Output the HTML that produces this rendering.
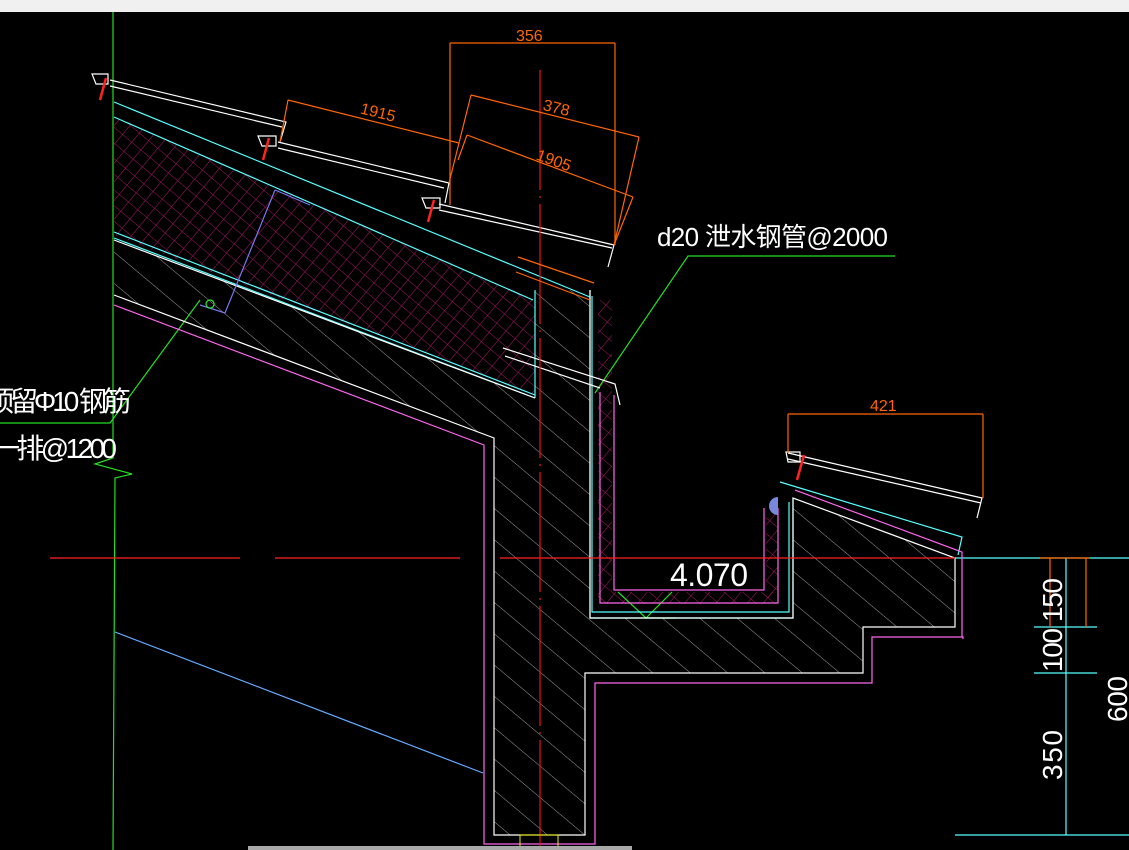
<!DOCTYPE html>
<html><head><meta charset="utf-8"><style>
html,body{margin:0;padding:0;background:#000;width:1129px;height:850px;overflow:hidden}
svg{display:block}
text{font-family:"Liberation Sans","Noto Sans CJK SC",sans-serif}
</style></head><body>
<svg width="1129" height="850" viewBox="0 0 1129 850" xmlns="http://www.w3.org/2000/svg">
<defs>
<pattern id="hatch" patternUnits="userSpaceOnUse" width="24" height="24" patternTransform="rotate(-50)">
<line x1="0" y1="0" x2="0" y2="24" stroke="#b0b0b0" stroke-width="0.9"/>
</pattern>
<pattern id="grid" patternUnits="userSpaceOnUse" width="12" height="12" patternTransform="rotate(40)">
<path d="M0 0H12M0 0V12" stroke="#a0185e" stroke-width="1.1" fill="none"/>
</pattern>
</defs>
<rect width="1129" height="850" fill="#000"/>
<rect width="1129" height="12" fill="#f0f0f0"/>

<polygon points="114,240 535,398 535,290 590,290 590,618 793,618 793,498 955,558 955,627 863,627 863,673 585,673 585,835 494,835 494,438 114,295" fill="url(#hatch)"/>
<polygon points="114,117 535,300 535,395 114,235" fill="url(#grid)"/>
<rect x="598" y="300" width="14" height="300" fill="url(#grid)"/>
<rect x="598" y="592" width="180" height="12" fill="url(#grid)"/>
<rect x="766" y="508" width="12" height="90" fill="url(#grid)"/>

<g fill="none" stroke-width="1.2">
<path d="M113 12V458L95 464L132 474L115 478L113 850" stroke="#22e022"/>
<path d="M0 423H110L200 300" stroke="#22e022"/>
<path d="M895 256H688L595 393" stroke="#22e022"/>
<path d="M618 592L646 618L672 592M646 618H676" stroke="#22e022"/>
<path d="M114 102L590 297M114 117L533 300M114 232L535 395M114 238L535 398" stroke="#5ff"/>
<path d="M535 290V398M590 290V618H793V498" stroke="#5ff"/>
<path d="M592 296V612H789V502" stroke="#5ff"/>
<path d="M780 482L962 537L958 555M955 558H1129M1034 627H1097M1034 673H1097M955 835H1129M1066 558V835" stroke="#5ff"/>
<path d="M110 80L286 122L280 142M110 86L282 127" stroke="#fff"/>
<path d="M278 142L449 183L445 203M278 148L444 188" stroke="#fff"/>
<path d="M439 204L614 245L608 267M439 210L612 248" stroke="#fff"/>
<path d="M788 453L982 498L977 518M788 459L981 503" stroke="#fff"/>
<path d="M114 295L494 438V835H585V673H863V627H955V558L793 498V618H590V290" stroke="#fff"/>
<path d="M114 240L535 398" stroke="#fff"/>
<path d="M503 348L615 384L620 405M505 356L600 388" stroke="#fff"/>
<path d="M92 74H108V84H96Z M258 136H276V146H262Z M422 198H440V208H426Z M786 452H800V462H788Z" stroke="#fff"/>
<path d="M114 305L484 445V844H595V683H872V637H963V639M795 490L962 552V637" stroke="#f6e"/>
<path d="M600 392V603H778V508M614 395V590H764V508" stroke="#f6e"/>
<path d="M50 558H240M275 558H460M500 558H955" stroke="#f22"/>
<path d="M540 70V850" stroke="#e11" stroke-dasharray="120 6 2 6"/>
<path d="M106 78L100 100M269 138L263 160M434 200L428 222M804 455L797 480" stroke="#f22" stroke-width="2.5"/>
<path d="M115 632L483 773" stroke="#6af"/>
<path d="M275 190L310 205M275 190L225 313L200 305" stroke="#77e"/>
<g stroke="#f60">
<path d="M450 43H615M450 43V205M615 43V245"/>
<path d="M288 100L459 143M288 100L280 142"/>
<path d="M471 95L639 137M471 95L449 183M639 137L614 245"/>
<path d="M467 135L633 197M467 135L458 160M633 197L614 245"/>
<path d="M518 257L594 283M516 272L590 300"/>
<path d="M788 414H983M788 414V453M983 414V498"/>
<path d="M1050 558V627M1086 558V627M1040 558H1090"/>
</g>
<path d="M210 300a4 4 0 1 0 0.1 0" stroke="#2e2"/>
</g>
<path d="M778 497a9 9 0 0 0 0 18z" fill="#7788dd"/>
<rect x="520" y="835" width="38" height="15" fill="none" stroke="#ee0"/>
<rect x="248" y="846" width="384" height="4" fill="#a8a8a8"/>

<g fill="#f60" font-size="16">
<text x="516" y="41">356</text>
<text x="360" y="117" transform="rotate(14 375 113)">1915</text>
<text x="543" y="113" transform="rotate(14 556 108)">378</text>
<text x="536" y="165" transform="rotate(20 552 160)">1905</text>
<text x="870" y="411">421</text>
</g>
<g fill="#fff">
<text x="657" y="246" font-size="26" textLength="231">d20 泄水钢管@2000</text>
<text x="-14" y="411" font-size="28" textLength="145">顶留Φ10 钢筋</text>
<text x="-8" y="458" font-size="28" textLength="125">一排@1200</text>
<text x="670" y="586" font-size="32" textLength="78">4.070</text>
<text font-size="28" transform="translate(1062 622) rotate(-90)" textLength="44">150</text>
<text font-size="28" transform="translate(1062 672) rotate(-90)" textLength="44">100</text>
<text font-size="28" transform="translate(1062 780) rotate(-90)" textLength="50">350</text>
<text font-size="28" transform="translate(1127 722) rotate(-90)" textLength="46">600</text>
</g>
</svg>
</body></html>
